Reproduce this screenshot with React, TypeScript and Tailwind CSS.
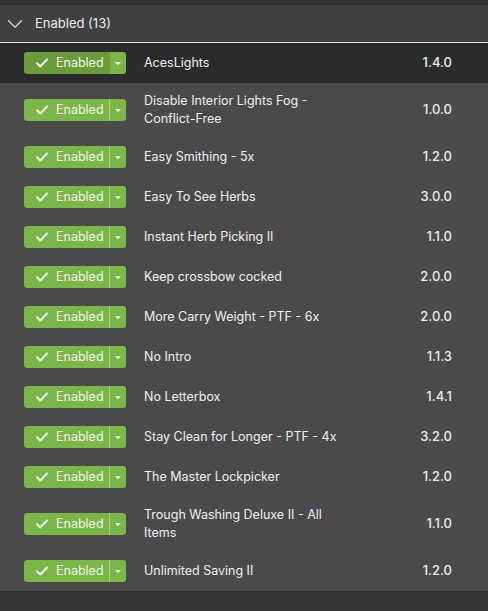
import { ChevronDown } from "lucide-react";

const MODS = [
  { name: "AcesLights", version: "1.4.0" },
  { name: "Disable Interior Lights Fog - Conflict-Free", version: "1.0.0" },
  { name: "Easy Smithing - 5x", version: "1.2.0" },
  { name: "Easy To See Herbs", version: "3.0.0" },
  { name: "Instant Herb Picking II", version: "1.1.0" },
  { name: "Keep crossbow cocked", version: "2.0.0" },
  { name: "More Carry Weight - PTF - 6x", version: "2.0.0" },
  { name: "No Intro", version: "1.1.3" },
  { name: "No Letterbox", version: "1.4.1" },
  { name: "Stay Clean for Longer - PTF - 4x", version: "3.2.0" },
  { name: "The Master Lockpicker", version: "1.2.0" },
  { name: "Trough Washing Deluxe II - All Items", version: "1.1.0" },
  { name: "Unlimited Saving II", version: "1.2.0" },
];

function Check() {
  return (
    <svg width="12" height="10" viewBox="0 0 12 10" fill="none">
      <path d="M1 5.2 L4.3 8.5 L11 1.5" stroke="#f2f7ec" strokeWidth="2" strokeLinecap="round" strokeLinejoin="round" />
    </svg>
  );
}

function StatusButton({ selected }: { selected: boolean }) {
  return (
    <div className="flex h-[22px] w-[102px] shrink-0 overflow-hidden rounded-[3px] text-[12.5px] text-[#f1f7ea]">
      <div
        className={
          "flex w-[85px] items-center gap-[8px] pl-[12px] " +
          (selected ? "bg-[#6b9c3b]" : "bg-[#7ab648]")
        }
      >
        <Check />
        <span>Enabled</span>
      </div>
      <div className={"w-px " + (selected ? "bg-[#6b9c3b]" : "bg-[#a9d383]")} />
      <div className="flex flex-1 items-center justify-center bg-[#7ab648]">
        <div className="h-0 w-0 border-x-[3px] border-t-[3px] border-x-transparent border-t-white" />
      </div>
    </div>
  );
}

export default function App() {
  return (
    <div className="h-[611px] w-[488px] bg-[#333333] pt-[5px] font-['Inter',sans-serif]">
      <div className="flex h-[38px] items-center gap-[7px] border-b border-[#e0e0e0] bg-[#404040] pl-[2px] text-[13px] text-[#ececec]">
        <ChevronDown size={26} strokeWidth={1.15} className="text-[#d8d8d8]" />
        <span>Enabled (13)</span>
      </div>
      {MODS.map((mod, i) => (
        <div
          key={mod.name}
          className={
            "flex items-center py-[9px] pl-[24px] pr-[36px] " +
            (i === 0 ? "bg-[#2a2b2b]" : "bg-[#4a4a4a]")
          }
        >
          <StatusButton selected={i === 0} />
          <div className="ml-[18px] w-[200px] text-[12.5px] leading-[18px] text-[#f0f0f0]">
            {mod.name}
          </div>
          <div className="ml-auto text-[13px] font-medium text-[#ececec]">{mod.version}</div>
        </div>
      ))}
    </div>
  );
}
